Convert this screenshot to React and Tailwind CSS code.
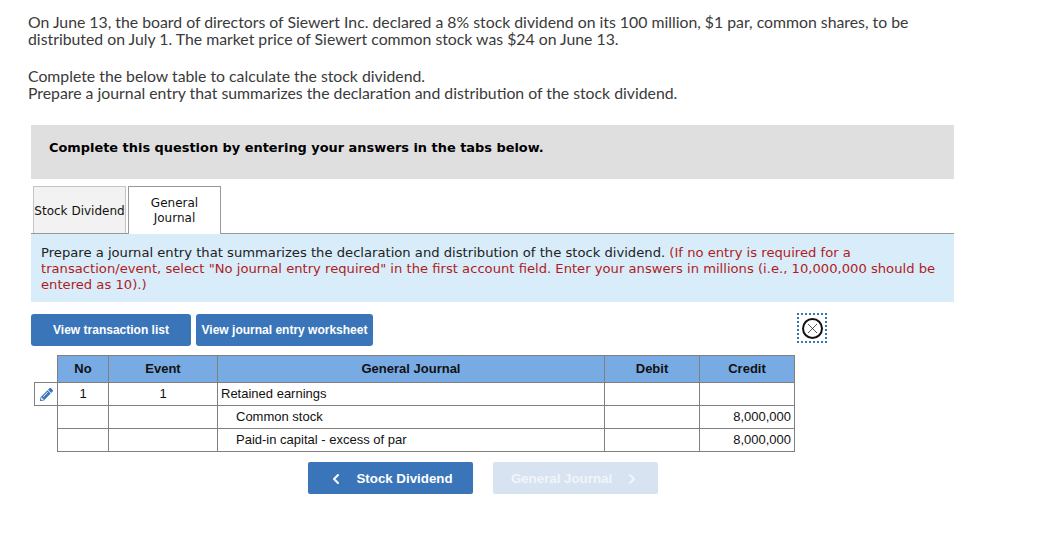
import { ChevronLeft, ChevronRight, X } from 'lucide-react'
import { FaPencilAlt } from 'react-icons/fa'

const filas = [
  { no: '1', evento: '1', cuenta: 'Retained earnings', credito: '', editable: true },
  { no: '', evento: '', cuenta: 'Common stock', credito: '8,000,000', sangria: true },
  { no: '', evento: '', cuenta: 'Paid-in capital - excess of par', credito: '8,000,000', sangria: true },
]

const celda = 'border border-[#808080] p-0'

export default function App() {
  return (
    <div className="w-[1052px] h-[550px] bg-white overflow-hidden font-['Liberation_Sans',sans-serif]">
      <div className="pt-[13px] pl-[28px] pr-[130px] font-['Lato',sans-serif] text-[15.8px] leading-[17px] text-[#3a3a3a]">
        <p>
          On June 13, the board of directors of Siewert Inc. declared a 8% stock dividend on its 100 million, $1 par, common shares, to be distributed on July 1. The market price of Siewert common stock was $24 on June 13.
        </p>
        <p className="mt-[20px]">Complete the below table to calculate the stock dividend.</p>
        <p>Prepare a journal entry that summarizes the declaration and distribution of the stock dividend.</p>
      </div>

      <div className="ml-[31px] w-[923px] mt-[24px]">
        <div className="h-[54px] bg-[#dfdfdf] flex items-center pl-[18px] pb-[9px] font-['DejaVu_Sans',sans-serif] font-bold text-[12.92px] text-black">
          Complete this question by entering your answers in the tabs below.
        </div>

        <div className="mt-[7px] h-[48px] flex items-end gap-[2px] pl-[2px] border-b border-[#999] font-['DejaVu_Sans',sans-serif] text-[12px] leading-[15px] text-[#111]">
          <div className="w-[93px] h-[47px] pt-[2px] flex items-center justify-center bg-[#f2f2f2] border border-b-0 border-[#c4c4c4] whitespace-nowrap">
            Stock Dividend
          </div>
          <div className="w-[93px] h-[48px] -mb-px flex items-center justify-center text-center bg-white border border-b-0 border-[#999]">
            General<br />Journal
          </div>
        </div>

        <div className="h-[68px] bg-[#d9ecfa] pt-[11px] pl-[10px] pr-[12px] font-['DejaVu_Sans',sans-serif] text-[13.15px] leading-[16px] text-[#222]">
          Prepare a journal entry that summarizes the declaration and distribution of the stock dividend.{' '}
          <span className="text-[#b01c1c]">
            (If no entry is required for a transaction/event, select "No journal entry required" in the first account field. Enter your answers in millions (i.e., 10,000,000 should be entered as 10).)
          </span>
        </div>

        <div className="mt-[12px] h-[32px] flex items-center text-white font-bold text-[12px]">
          <button className="w-[160px] h-[32px] bg-[#3a75b9] rounded-[3px]">View transaction list</button>
          <button className="ml-[5px] w-[177px] h-[32px] bg-[#3a75b9] rounded-[3px]">View journal entry worksheet</button>
          <div className="relative ml-auto mr-[127px] -mt-[4px] w-[30px] h-[30px] flex items-center justify-center border-[2px] border-dotted border-[#3a75b9]">
            <div className="w-[21px] h-[21px] rounded-full border-[2px] border-[#111] flex items-center justify-center">
              <X size={17} strokeWidth={1} className="text-[#111] shrink-0" />
            </div>
          </div>
        </div>
      </div>

      <table className="ml-[34px] mt-[9px] table-fixed border-collapse text-[13px] text-[#111]">
        <colgroup>
          <col className="w-[23px]" />
          <col className="w-[51px]" />
          <col className="w-[109px]" />
          <col className="w-[387px]" />
          <col className="w-[95px]" />
          <col className="w-[95px]" />
        </colgroup>
        <thead>
          <tr className="h-[27px]">
            <th className="p-0 border-0"></th>
            {['No', 'Event', 'General Journal', 'Debit', 'Credit'].map((t) => (
              <th key={t} className={`${celda} bg-[#78abe4] font-bold`}>{t}</th>
            ))}
          </tr>
        </thead>
        <tbody>
          {filas.map((f) => (
            <tr key={f.cuenta} className="h-[23px]">
              {f.editable ? (
                <td className={`${celda} text-center`}>
                  <FaPencilAlt size={13} className="inline-block text-[#3a75b9]" />
                </td>
              ) : (
                <td className="p-0 border-0"></td>
              )}
              <td className={`${celda} text-center`}>{f.no}</td>
              <td className={`${celda} text-center`}>{f.evento}</td>
              <td className={`${celda} ${f.sangria ? 'pl-[18px]' : 'pl-[3px]'}`}>{f.cuenta}</td>
              <td className={celda}></td>
              <td className={`${celda} text-right pr-[3px]`}>{f.credito}</td>
            </tr>
          ))}
        </tbody>
      </table>

      <div className="mt-[10px] ml-[308px] flex gap-[20px] font-bold text-[13.3px]">
        <button className="w-[165px] h-[32px] pt-px bg-[#3a75b9] rounded-[2px] text-white flex items-center justify-center">
          <ChevronLeft size={16} strokeWidth={3} className="mr-[12px]" />
          Stock Dividend
        </button>
        <button className="w-[165px] h-[32px] pt-px bg-[#d8e3f1] rounded-[2px] text-[#f1f5fa] flex items-center justify-center">
          General Journal
          <ChevronRight size={16} strokeWidth={3} className="ml-[12px]" />
        </button>
      </div>
    </div>
  )
}
